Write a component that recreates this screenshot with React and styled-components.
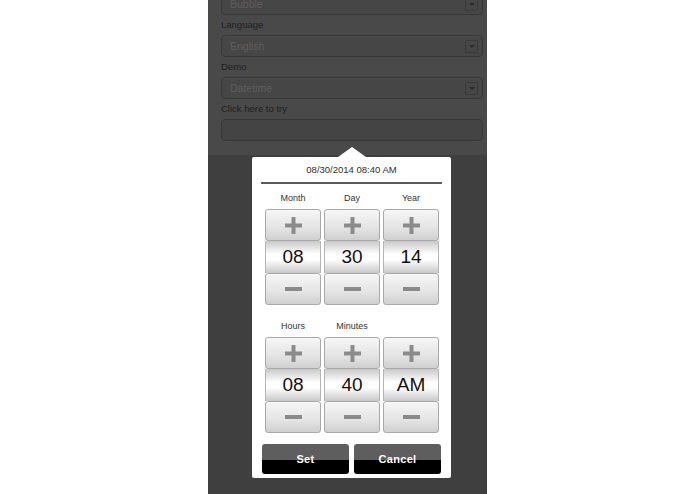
import React from "react";
import styled, { createGlobalStyle } from "styled-components";

const Global = createGlobalStyle`
  html, body { margin: 0; padding: 0; background: #ffffff; }
  body { font-family: "Liberation Sans", Arial, sans-serif; }
  * { box-sizing: border-box; }
`;

const Page = styled.div`
  display: flex;
  justify-content: center;
  height: 494px;
  overflow: hidden;
`;

const Panel = styled.div`
  position: relative;
  width: 279px;
  height: 494px;
  background: #3f3f3f;
  display: flex;
  flex-direction: column;
  overflow: hidden;
`;

const Form = styled.div`
  margin-top: -7px;
  background: #494949;
  padding: 0 4px 14px 13px;
  display: flex;
  flex-direction: column;
`;

const FieldLabel = styled.div`
  height: 20px;
  line-height: 20px;
  font-size: 9.5px;
  color: #1e1e1e;
`;

const Select = styled.div`
  height: 22px;
  border: 1px solid #373737;
  border-radius: 4px;
  background: #464646;
  box-shadow: inset 0 1px 0 #4e4e4e;
  display: flex;
  align-items: center;
  justify-content: space-between;
  padding: 0 4px 0 8px;
  font-size: 10.5px;
  color: #5e5e5e;
`;

const ArrowBox = styled.div`
  width: 13px;
  height: 13px;
  border: 1px solid #3a3a3a;
  border-radius: 2px;
  display: flex;
  align-items: center;
  justify-content: center;
  &::after {
    content: "";
    border-left: 3px solid transparent;
    border-right: 3px solid transparent;
    border-top: 3px solid #2c2c2c;
  }
`;

const TextInput = styled.div`
  height: 22px;
  border: 1px solid #373737;
  border-radius: 4px;
  background: #444444;
`;

const Popup = styled.div`
  position: absolute;
  left: 44px;
  top: 157px;
  width: 199px;
  height: 321px;
  background: #ffffff;
  border-radius: 2px;
  padding: 5px 0 4px;
  display: flex;
  flex-direction: column;
  &::before {
    content: "";
    position: absolute;
    top: -10px;
    left: 86px;
    border-left: 14px solid transparent;
    border-right: 14px solid transparent;
    border-bottom: 10px solid #ffffff;
  }
`;

const Title = styled.div`
  height: 16px;
  line-height: 16px;
  text-align: center;
  font-size: 9.5px;
  color: #2e2e2e;
`;

const Rule = styled.div`
  height: 2px;
  margin: 4px 9px 0;
  background: #5a5a5a;
`;

const Grid = styled.div`
  display: grid;
  grid-template-columns: repeat(3, 56px);
  column-gap: 3px;
  padding: 0 12px 0 13px;
  margin-top: ${(p) => p.$mt}px;
`;

const ColLabel = styled.div`
  height: 14px;
  line-height: 14px;
  text-align: center;
  font-size: 9px;
  color: #333333;
  margin-bottom: 4px;
`;

const Spinner = styled.div`
  display: flex;
  flex-direction: column;
`;

const StepBtn = styled.div`
  height: 32px;
  border: 1px solid #a9a9a9;
  border-radius: 3px;
  background: linear-gradient(#f6f6f6, #e4e4e4 60%, #cfcfcf);
  display: flex;
  align-items: center;
  justify-content: center;
`;

const Value = styled.div`
  height: 32px;
  border-left: 1px solid #b4b4b4;
  border-right: 1px solid #b4b4b4;
  background: linear-gradient(#c9c9c9, #ffffff 42%, #ffffff 58%, #c9c9c9);
  display: flex;
  align-items: center;
  justify-content: center;
  font-size: 19px;
  color: #111111;
`;

const Actions = styled.div`
  display: flex;
  gap: 5px;
  padding: 0 10px;
  margin-top: 11px;
`;

const ActionBtn = styled.div`
  flex: 1;
  height: 30px;
  border-radius: 3px;
  background: linear-gradient(#5e5e5e 0%, #5e5e5e 52%, #000000 52%, #000000 100%);
  display: flex;
  align-items: center;
  justify-content: center;
  color: #ffffff;
  font-size: 11px;
  font-weight: bold;
  letter-spacing: 0.3px;
`;

const Plus = () => (
  <svg width="17" height="17" viewBox="0 0 17 17">
    <rect x="0" y="6.5" width="17" height="4" fill="#8b8b8b" />
    <rect x="6.5" y="0" width="4" height="17" fill="#8b8b8b" />
  </svg>
);

const Minus = () => (
  <svg width="17" height="4" viewBox="0 0 17 4">
    <rect x="0" y="0" width="17" height="4" fill="#8b8b8b" />
  </svg>
);

const SpinnerCol = ({ value }) => (
  <Spinner>
    <StepBtn>
      <Plus />
    </StepBtn>
    <Value>{value}</Value>
    <StepBtn>
      <Minus />
    </StepBtn>
  </Spinner>
);

const Group = ({ labels, values, mt }) => (
  <Grid $mt={mt}>
    {labels.map((l, i) => (
      <ColLabel key={"l" + i}>{l}</ColLabel>
    ))}
    {values.map((v, i) => (
      <SpinnerCol key={"v" + i} value={v} />
    ))}
  </Grid>
);

export default function App() {
  return (
    <>
      <Global />
      <Page>
        <Panel>
          <Form>
            <Select>
              Bubble
              <ArrowBox />
            </Select>
            <FieldLabel>Language</FieldLabel>
            <Select>
              English
              <ArrowBox />
            </Select>
            <FieldLabel>Demo</FieldLabel>
            <Select>
              Datetime
              <ArrowBox />
            </Select>
            <FieldLabel>Click here to try</FieldLabel>
            <TextInput />
          </Form>
          <Popup>
            <Title>08/30/2014 08:40 AM</Title>
            <Rule />
            <Group labels={["Month", "Day", "Year"]} values={["08", "30", "14"]} mt={7} />
            <Group labels={["Hours", "Minutes", ""]} values={["08", "40", "AM"]} mt={14} />
            <Actions>
              <ActionBtn>Set</ActionBtn>
              <ActionBtn>Cancel</ActionBtn>
            </Actions>
          </Popup>
        </Panel>
      </Page>
    </>
  );
}
